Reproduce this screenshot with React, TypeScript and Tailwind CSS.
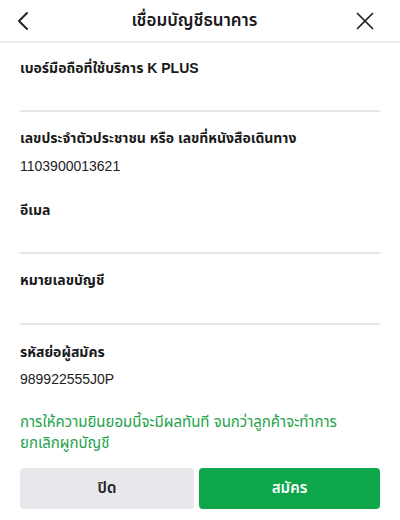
import { ChevronLeft, X } from 'lucide-react'

const FONT = { fontFamily: '"Liberation Sans", "Noto Sans Thai", "Noto Sans", sans-serif' }

function Label({ children }: { children: React.ReactNode }) {
  return <div className="text-[14px] font-bold leading-6 text-[#1a1a1a]">{children}</div>
}

function Value({ children }: { children: React.ReactNode }) {
  return <div className="text-[14px] leading-6 text-[#222]">{children}</div>
}

function Line() {
  return <div className="h-[2px] bg-[#e6e6e6]" />
}

export default function App() {
  return (
    <div className="w-[400px] h-[520px] bg-white flex flex-col overflow-hidden" style={FONT}>
      {/* Header */}
      <header className="h-[43px] shrink-0 flex items-center justify-between px-3 border-b-2 border-[#ececec]">
        <ChevronLeft size={32} strokeWidth={1.5} className="text-[#222] -ml-[5px]" />
        <h1 className="text-[17px] font-semibold text-[#1a1a1a]">เชื่อมบัญชีธนาคาร</h1>
        <X size={30} strokeWidth={1.4} className="text-[#222] mr-[8px]" />
      </header>

      <div className="px-5 flex flex-col">
        <div className="pt-[13px]">
          <Label>เบอร์มือถือที่ใช้บริการ K PLUS</Label>
          <div className="h-[30px]" />
          <Line />
        </div>

        <div className="pt-[14px]">
          <Label>เลขประจำตัวประชาชน หรือ เลขที่หนังสือเดินทาง</Label>
          <div className="mt-1">
            <Value>1103900013621</Value>
          </div>
        </div>

        <div className="pt-[20px]">
          <Label>อีเมล</Label>
          <div className="h-[30px]" />
          <Line />
        </div>

        <div className="pt-[14px]">
          <Label>หมายเลขบัญชี</Label>
          <div className="h-[31px]" />
          <Line />
        </div>

        <div className="pt-[15px]">
          <Label>รหัสย่อผู้สมัคร</Label>
          <div className="mt-[3px]">
            <Value>989922555J0P</Value>
          </div>
        </div>

        <p className="pt-[20px] text-[15px] leading-[21px] text-[#1ea34b]">
          การให้ความยินยอมนี้จะมีผลทันที จนกว่าลูกค้าจะทำการ
          <br />
          ยกเลิกผูกบัญชี
        </p>

        <div className="mt-[15px] flex gap-[5px]">
          <button className="w-[174px] h-[41px] rounded-[4px] bg-[#e8e8ec] text-[15px] font-semibold text-[#222]">
            ปิด
          </button>
          <button className="flex-1 h-[41px] rounded-[4px] bg-[#0da64b] text-[15px] font-semibold text-white">
            สมัคร
          </button>
        </div>
      </div>
    </div>
  )
}
